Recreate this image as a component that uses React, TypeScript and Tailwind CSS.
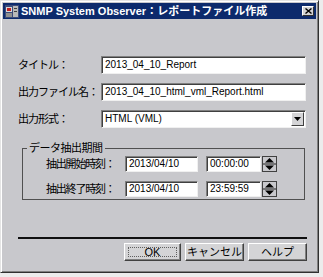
const font = "font-['Liberation_Sans','Noto_Sans_CJK_JP',sans-serif]";

function Field({ value, className }: { value: string; className: string }) {
  return (
    <div
      className={`flex items-center bg-white border border-t-[#808080] border-l-[#808080] border-b-[#f0f0f0] border-r-[#f0f0f0] shadow-[inset_1px_1px_0_#404040] pl-[3px] text-[10px] text-black leading-none whitespace-nowrap overflow-hidden ${className}`}
    >
      {value}
    </div>
  );
}

function Spinner() {
  return (
    <svg width="15" height="16" viewBox="0 0 15 16" className="ml-[1px]">
      <rect x="0.5" y="0.5" width="14" height="15" fill="#c8c8cc" stroke="#404040" />
      <line x1="1" y1="8" x2="14" y2="8" stroke="#202020" />
      <polygon points="7.5,2 12,6.5 3,6.5" fill="#000" />
      <polygon points="3,9.5 12,9.5 7.5,14" fill="#000" />
    </svg>
  );
}

function Button({ label, width, focused }: { label: string; width: string; focused?: boolean }) {
  return (
    <div
      className={`relative flex items-center justify-center h-[18px] ${width} bg-[#d4d4d6] border border-t-white border-l-white border-b-[#404040] border-r-[#404040] shadow-[inset_-1px_-1px_0_#808080] text-[11px] text-black`}
    >
      {focused && <div className="absolute inset-[3px] border border-dotted border-[#606060]" />}
      {label}
    </div>
  );
}

export default function App() {
  return (
    <div className={`w-[323px] h-[277px] bg-[#ececec] ${font}`}>
      <div className="w-[319px] h-[273px] bg-[#c8c8cc] border border-t-[#e4e4e4] border-l-[#e4e4e4] border-b-[#303030] border-r-[#303030] shadow-[inset_1px_1px_0_#ffffff,inset_-1px_-1px_0_#808080] p-[2px] flex flex-col">
        <div className="h-[16px] bg-[#0c2a6c] flex items-center pl-[2px] pr-[2px]">
          <svg width="14" height="13" viewBox="0 0 14 13">
            <rect x="0" y="0" width="14" height="13" fill="#3a4a7a" />
            <rect x="1" y="2" width="6" height="5" fill="#d8d8d8" />
            <rect x="2" y="3" width="4" height="3" fill="#c02020" />
            <rect x="8" y="1" width="5" height="11" fill="#b8b8b8" />
            <rect x="9" y="3" width="3" height="1" fill="#404040" />
            <rect x="9" y="6" width="3" height="1" fill="#404040" />
            <rect x="1" y="8" width="6" height="4" fill="#909090" />
          </svg>
          <span className="ml-[2px] text-white font-bold text-[11px] leading-none whitespace-nowrap">
            SNMP System Observer：レポートファイル作成
          </span>
          <div className="ml-auto w-[12px] h-[10px] bg-[#d4d4d6] border border-t-white border-l-white border-b-[#303030] border-r-[#303030] flex items-center justify-center">
            <svg width="7" height="6" viewBox="0 0 7 6">
              <path d="M0.5 0.5 L6.5 5.5 M6.5 0.5 L0.5 5.5" stroke="#000" strokeWidth="1.4" />
            </svg>
          </div>
        </div>

        <div className="flex flex-col pl-[15px] pr-[10px] pt-[37px] gap-[9px] text-[11px] tracking-[-1px] text-black">
          <div className="flex items-center">
            <span className="w-[83px] shrink-0 whitespace-nowrap">タイトル：</span>
            <Field value="2013_04_10_Report" className="h-[18px] w-[207px] tracking-normal" />
          </div>
          <div className="flex items-center">
            <span className="w-[83px] shrink-0 whitespace-nowrap">出力ファイル名：</span>
            <Field value="2013_04_10_html_vml_Report.html" className="h-[18px] w-[207px] tracking-normal" />
          </div>
          <div className="flex items-center">
            <span className="w-[83px] shrink-0 whitespace-nowrap">出力形式：</span>
            <div className="flex items-center h-[18px] w-[207px] bg-white border border-t-[#808080] border-l-[#808080] border-b-[#f0f0f0] border-r-[#f0f0f0] shadow-[inset_1px_1px_0_#404040] pl-[3px] pr-[1px] tracking-normal">
              <span className="text-[10px] leading-none">HTML (VML)</span>
              <div className="ml-auto w-[13px] h-[14px] bg-[#d4d4d6] border border-t-white border-l-white border-b-[#404040] border-r-[#404040] flex items-center justify-center">
                <svg width="7" height="5" viewBox="0 0 7 5">
                  <polygon points="0,0 7,0 3.5,4" fill="#000" />
                </svg>
              </div>
            </div>
          </div>
        </div>

        <fieldset className="mt-[15px] ml-[19px] w-[283px] border border-[#505050] px-[0px] pb-[2px] pt-[2px]">
          <legend className="ml-[4px] px-[2px] text-[11px] tracking-[-0.5px] leading-none">データ抽出期間</legend>
          <div className="flex flex-col gap-[8px] pl-[23px] text-[11px]">
            <div className="flex items-center">
              <span className="w-[79px] shrink-0 whitespace-nowrap tracking-[-1.2px]">抽出開始時刻：</span>
              <Field value="2013/04/10" className="h-[16px] w-[73px]" />
              <Field value="00:00:00" className="h-[16px] w-[55px] ml-[8px]" />
              <Spinner />
            </div>
            <div className="flex items-center">
              <span className="w-[79px] shrink-0 whitespace-nowrap tracking-[-1.2px]">抽出終了時刻：</span>
              <Field value="2013/04/10" className="h-[16px] w-[73px]" />
              <Field value="23:59:59" className="h-[16px] w-[55px] ml-[8px]" />
              <Spinner />
            </div>
          </div>
        </fieldset>

        <div className="mt-auto mb-[9px] ml-[15px] w-[289px] flex flex-col">
          <div className="h-[2px] bg-[#101010]" />
          <div className="flex justify-end gap-[4px] mt-[4px]">
            <Button label="OK" width="w-[57px]" focused />
            <Button label="キャンセル" width="w-[59px]" />
            <Button label="ヘルプ" width="w-[59px]" />
          </div>
        </div>
      </div>
    </div>
  );
}
